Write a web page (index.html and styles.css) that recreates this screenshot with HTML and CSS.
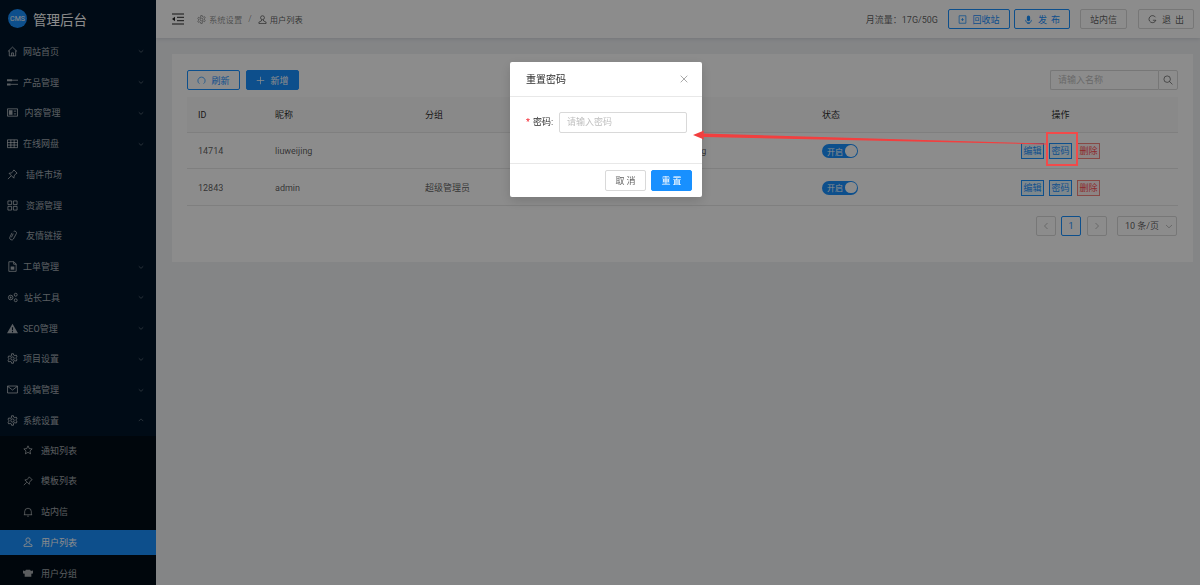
FILE: index.html
```html
<!DOCTYPE html>
<html lang="zh-CN">
<head>
<meta charset="utf-8">
<title>用户列表</title>
<link rel="stylesheet" href="styles.css">
</head>
<body>
<svg class="defs" width="0" height="0" aria-hidden="true">
  <symbol id="i-home" viewBox="0 0 12 12"><path d="M1 6 6 1.2 11 6M2.5 5v5.800h7V5M5 10.800V7.500h2v3.300"/></symbol>
  <symbol id="i-bars" viewBox="0 0 12 12"><path class="solid" d="M0 2.500h5.500v2.200H0zM0 7h4v2.200H0z"/><path d="M5.500 3.500H12M4 8h8"/></symbol>
  <symbol id="i-pic" viewBox="0 0 12 12"><path d="M.5 2h11v8H.5z"/><path class="solid" d="M2 3.500h4v5H2z"/><path d="M7.500 4.500h2.500M7.500 7.500h2.500"/></symbol>
  <symbol id="i-table" viewBox="0 0 12 12"><path d="M.5 2h11v8.500H.5zM.5 5h11M.5 7.700h11M4.200 2v8.500M7.800 2v8.500"/></symbol>
  <symbol id="i-pin" viewBox="0 0 12 12"><path d="M7.500 1 11 4.500 9.800 5 7.800 7.500 7.500 10 2.200 4.700 4.700 4.300 7 2.200ZM4.500 7.500 1 11"/></symbol>
  <symbol id="i-grid" viewBox="0 0 12 12"><path d="M1 1h4v4H1zM7 1h4v4H7zM1 7h4v4H1zM7 7h4v4H7z"/></symbol>
  <symbol id="i-link" viewBox="0 0 12 12"><path d="M7.300 1.500a2 2 0 0 1 2.900 2.400L7 9.800a2.200 2.200 0 0 1-4-1.700l2.500-5M6.800 4 4.800 8"/></symbol>
  <symbol id="i-file" viewBox="0 0 12 12"><path d="M2 .8h5.500L10 3.300v8H2zM7.300 1v2.500H10"/><path class="solid" d="M4 6h4v3.500H4z"/></symbol>
  <symbol id="i-tools" viewBox="0 0 12 12"><circle cx="4" cy="6" r="2.500"/><circle class="solid" cx="4" cy="6" r="1"/><circle cx="9.500" cy="3" r="1.600"/><circle cx="9.500" cy="9" r="1.600"/></symbol>
  <symbol id="i-warn" viewBox="0 0 12 12"><path class="solid" fill-rule="evenodd" d="M6 .8 12 11.200H0ZM5.400 4.500v3.500h1.200V4.500ZM5.400 8.800V10h1.200V8.800Z"/></symbol>
  <symbol id="i-gear" viewBox="0 0 12 12"><circle cx="6" cy="6" r="1.800"/><path d="M5 .8h2l.3 1.500 1.300.6 1.400-.7 1 1.700-1.200 1v1.300l1.200 1-1 1.700-1.400-.7-1.300.6L7 11.200H5l-.3-1.500-1.300-.6-1.400.7-1-1.700 1.200-1V5.800L1 4.800l1-1.700 1.400.7 1.300-.6Z"/></symbol>
  <symbol id="i-mail" viewBox="0 0 12 12"><path d="M.6 2.200h10.800v7.600H.6zM.8 2.600 6 6.600l5.200-4"/></symbol>
  <symbol id="i-star" viewBox="0 0 12 12"><path d="M6 1 7.500 4.300l3.500.4-2.600 2.400.7 3.500L6 8.800l-3.100 1.800.7-3.500L1 4.700l3.500-.4Z"/></symbol>
  <symbol id="i-bell" viewBox="0 0 12 12"><path d="M2 9.300V5.500a4 4 0 0 1 8 0v3.800M1 9.300h10M5 11h2"/></symbol>
  <symbol id="i-user" viewBox="0 0 12 12"><circle cx="6" cy="3.600" r="2.600"/><path d="M4.800 6.500 4.500 8 1.200 9.500v1.800h9.600V9.500L7.500 8l-.3-1.500"/></symbol>
  <symbol id="i-team" viewBox="0 0 12 12"><path class="solid" d="M3.500 2h5l1 1.500L12 3v3.500l-2 .5v3.500H2V7L0 6.500V3l2.500.5Z"/></symbol>
  <symbol id="i-chev" viewBox="0 0 8 8"><path d="M1 3 4 5.800 7 3"/></symbol>
  <symbol id="i-chev-up" viewBox="0 0 8 8"><path d="M1 5.500 4 2.500 7 5.500"/></symbol>
  <symbol id="i-left" viewBox="0 0 8 8"><path d="M5.500 1 2.500 4 5.500 7"/></symbol>
  <symbol id="i-right" viewBox="0 0 8 8"><path d="M2.500 1 5.500 4 2.500 7"/></symbol>
  <symbol id="i-fold" viewBox="0 0 12 12"><path d="M0 1h12M5 4.300h7M5 7.700h7M0 11h12"/><path class="solid" d="M3 3.800v4.400L0 6Z"/></symbol>
  <symbol id="i-reload" viewBox="0 0 12 12"><path d="M3.200 10.200a4.800 4.800 0 1 1 5.600 0"/></symbol>
  <symbol id="i-plus" viewBox="0 0 12 12"><path d="M6 1v10M1 6h10"/></symbol>
  <symbol id="i-trash" viewBox="0 0 12 12"><path d="M1.500 1h9v10h-9zM6 4v4M4.200 6.200h3.600"/></symbol>
  <symbol id="i-mic" viewBox="0 0 12 12"><path class="solid" d="M3.800 3a2.200 2.200 0 0 1 4.400 0v3a2.200 2.200 0 0 1-4.400 0Z"/><path d="M2 6.500a4 4 0 0 0 8 0M6 10v1.500M4 11.500h4"/></symbol>
  <symbol id="i-logout" viewBox="0 0 12 12"><path d="M10 3a4.700 4.700 0 1 0 .5 4H6.500"/></symbol>
  <symbol id="i-search" viewBox="0 0 12 12"><circle cx="5" cy="5" r="3.900"/><path d="M8 8 11.300 11.300"/></symbol>
  <symbol id="i-close" viewBox="0 0 12 12"><path d="M1 1 11 11M11 1 1 11"/></symbol>
</svg>

<div class="layout">
  <aside class="sidebar">
    <div class="brand"><span class="logo">CMS</span><span class="brand-name">管理后台</span></div>
    <nav class="menu">
      <a class="item"><svg class="ic"><use href="#i-home"/></svg><span>网站首页</span><svg class="chev"><use href="#i-chev"/></svg></a>
      <a class="item"><svg class="ic"><use href="#i-bars"/></svg><span>产品管理</span><svg class="chev"><use href="#i-chev"/></svg></a>
      <a class="item"><svg class="ic"><use href="#i-pic"/></svg><span class="gap-m">内容管理</span><svg class="chev"><use href="#i-chev"/></svg></a>
      <a class="item"><svg class="ic"><use href="#i-table"/></svg><span>在线网盘</span><svg class="chev"><use href="#i-chev"/></svg></a>
      <a class="item"><svg class="ic"><use href="#i-pin"/></svg><span class="gap-l">插件市场</span></a>
      <a class="item"><svg class="ic"><use href="#i-grid"/></svg><span class="gap-l">资源管理</span></a>
      <a class="item"><svg class="ic"><use href="#i-link"/></svg><span class="gap-l">友情链接</span></a>
      <a class="item"><svg class="ic"><use href="#i-file"/></svg><span>工单管理</span><svg class="chev"><use href="#i-chev"/></svg></a>
      <a class="item"><svg class="ic"><use href="#i-tools"/></svg><span class="gap-s">站长工具</span><svg class="chev"><use href="#i-chev"/></svg></a>
      <a class="item"><svg class="ic"><use href="#i-warn"/></svg><span>SEO管理</span><svg class="chev"><use href="#i-chev"/></svg></a>
      <a class="item"><svg class="ic"><use href="#i-gear"/></svg><span>项目设置</span><svg class="chev"><use href="#i-chev"/></svg></a>
      <a class="item"><svg class="ic"><use href="#i-mail"/></svg><span>投稿管理</span><svg class="chev"><use href="#i-chev"/></svg></a>
      <a class="item"><svg class="ic"><use href="#i-gear"/></svg><span>系统设置</span><svg class="chev"><use href="#i-chev-up"/></svg></a>
      <div class="submenu">
        <a class="sub"><svg class="ic"><use href="#i-star"/></svg><span>通知列表</span></a>
        <a class="sub"><svg class="ic"><use href="#i-pin"/></svg><span>模板列表</span></a>
        <a class="sub"><svg class="ic"><use href="#i-bell"/></svg><span>站内信</span></a>
        <a class="sub active"><svg class="ic"><use href="#i-user"/></svg><span>用户列表</span></a>
        <a class="sub"><svg class="ic"><use href="#i-team"/></svg><span>用户分组</span></a>
      </div>
    </nav>
  </aside>

  <div class="main">
    <header class="topbar">
      <svg class="fold"><use href="#i-fold"/></svg>
      <div class="crumbs">
        <span class="crumb"><svg class="ic-s"><use href="#i-gear"/></svg>系统设置</span>
        <span class="sep">/</span>
        <span class="crumb current"><svg class="ic-s"><use href="#i-user"/></svg>用户列表</span>
      </div>
      <div class="top-actions">
        <span class="traffic">月流量：17G/50G</span>
        <button class="tbtn primary w62"><svg class="ic-s"><use href="#i-trash"/></svg>回收站</button>
        <button class="tbtn primary w56 gap4 spaced"><svg class="ic-s"><use href="#i-mic"/></svg>发 布</button>
        <button class="tbtn w47 gap10">站内信</button>
        <button class="tbtn w56 gap11 spaced"><svg class="ic-s"><use href="#i-logout"/></svg>退 出</button>
      </div>
    </header>

    <section class="card">
      <div class="toolbar">
        <button class="btn outline"><svg class="ic-s"><use href="#i-reload"/></svg>刷新</button>
        <button class="btn solid"><svg class="ic-s"><use href="#i-plus"/></svg>新增</button>
        <div class="search"><input class="search-input" placeholder="请输入名称"><span class="search-btn"><svg class="ic-m"><use href="#i-search"/></svg></span></div>
      </div>
      <table class="table">
        <colgroup><col class="c1"><col class="c2"><col class="c3"><col class="c4"><col class="c5"><col class="c6"></colgroup>
        <thead><tr><th>ID</th><th>昵称</th><th>分组</th><th></th><th>状态</th><th class="center">操作</th></tr></thead>
        <tbody>
          <tr>
            <td>14714</td><td>liuweijing</td><td></td><td>liuweijing</td>
            <td><span class="switch">开启<i class="knob"></i></span></td>
            <td class="center"><span class="act">编辑</span><span class="act">密码</span><span class="act danger">删除</span></td>
          </tr>
          <tr>
            <td>12843</td><td>admin</td><td>超级管理员</td><td></td>
            <td><span class="switch">开启<i class="knob"></i></span></td>
            <td class="center"><span class="act">编辑</span><span class="act">密码</span><span class="act danger">删除</span></td>
          </tr>
        </tbody>
      </table>
      <div class="pager">
        <span class="page muted"><svg class="arrow-s"><use href="#i-left"/></svg></span>
        <span class="page on">1</span>
        <span class="page muted"><svg class="arrow-s"><use href="#i-right"/></svg></span>
        <span class="size">10 条/页<svg class="chev-s"><use href="#i-chev"/></svg></span>
      </div>
    </section>
  </div>
</div>

<div class="mask"></div>

<div class="modal">
  <div class="modal-head"><span>重置密码</span><svg class="close"><use href="#i-close"/></svg></div>
  <div class="modal-body">
    <label class="field-label"><em>*</em>密码:</label>
    <input class="field-input" placeholder="请输入密码">
  </div>
  <div class="modal-foot">
    <button class="mbtn">取 消</button>
    <button class="mbtn ok">重 置</button>
  </div>
</div>

<svg class="note" viewBox="0 0 1200 585" aria-hidden="true">
  <polygon class="arrow" points="693,135 704,130.500 703.500,133.500 1046,143.600 1046,144.400 703.500,137 704,139.500"/>
  <rect class="mark" x="1047" y="133" width="30" height="32"/>
</svg>
</body>
</html>
```
FILE: styles.css
```css
* { box-sizing: border-box; }
html, body { margin: 0; height: 100%; overflow: hidden; }
body {
  font-family: Roboto, "Noto Sans CJK SC", sans-serif;
  font-size: 9px;
  color: rgba(0, 0, 0, .65);
  background: #f0f2f5;
}
.defs { position: absolute; }
svg { fill: none; stroke: currentColor; stroke-width: 1; flex: none; }
svg .solid, symbol .solid { fill: currentColor; stroke: none; }

.layout { display: flex; height: 585px; }

/* sidebar */
.sidebar { width: 156px; flex: none; background: #001529; color: rgba(255, 255, 255, .65); overflow: hidden; }
.brand { height: 36px; display: flex; align-items: center; padding: 1px 0 0 8px; }
.logo {
  width: 19px; height: 19px; border-radius: 50%; background: #1890ff; color: #fff;
  display: flex; align-items: center; justify-content: center; font-size: 7px;
}
.brand-name { margin-left: 6px; font-size: 13.500px; color: #fff; }
.item { height: 30.750px; display: flex; align-items: center; padding: 0 12px 0 7px; }
.item .ic { width: 11px; height: 11px; }
.sub .ic { width: 10px; height: 10px; }
.item span { margin-left: 5px; }
.item .gap-s { margin-left: 6px; }
.item .gap-m { margin-left: 6.500px; }
.item .gap-l { margin-left: 8px; }
.chev { width: 6px; height: 6px; margin-left: auto; opacity: .6; }
.submenu { background: #000c17; }
.sub { height: 25.750px; margin-bottom: 5px; display: flex; align-items: center; padding-left: 23px; position: relative; top: 1.500px; }
.sub span { margin-left: 8px; }
.sub.active { background: #1890ff; color: #fff; }

/* header */
.main { flex: 1; min-width: 0; }
.topbar {
  height: 38px; background: #fff; display: flex; align-items: center;
  box-shadow: 0 1px 4px rgba(0, 21, 41, .12); padding: 0 6px 0 16px;
}
.fold { width: 12px; height: 12px; color: rgba(0, 0, 0, .85); }
.crumbs { display: flex; align-items: center; margin-left: 13px; color: rgba(0, 0, 0, .45); font-size: 8.300px; }
.crumb { display: flex; align-items: center; gap: 3px; }
.crumb.current { color: rgba(0, 0, 0, .65); }
.ic-s { width: 9px; height: 9px; }
.ic-m { width: 10px; height: 10px; }
.sep { margin: 0 6px; }
.top-actions { display: flex; align-items: center; margin-left: auto; }
.traffic { margin-right: 10px; }
.tbtn {
  height: 20px; padding: 0; border: 1px solid #d9d9d9; background: #fff; border-radius: 2px;
  font: inherit; color: rgba(0, 0, 0, .65); display: flex; align-items: center; justify-content: center; gap: 5px;
}
.tbtn.primary { border-color: #1890ff; color: #1890ff; }
.spaced { word-spacing: 2px; }
.w62 { width: 62px; }
.w56 { width: 56px; }
.w47 { width: 47px; }
.gap4 { margin-left: 4px; }
.gap10 { margin-left: 10px; }
.gap11 { margin-left: 11px; }

/* card */
.card { margin: 16px 7px 0 16px; background: #fff; padding: 16px 15px 26px; height: 208px; }
.toolbar { display: flex; align-items: center; height: 20px; }
.btn {
  width: 53px; height: 20px; padding: 0; border: 1px solid #1890ff; background: #fff; color: #1890ff;
  border-radius: 2px; font: inherit; display: flex; align-items: center; justify-content: center; gap: 5px;
}
.btn.solid { background: #1890ff; color: #fff; margin-left: 6px; }
.search { display: flex; margin-left: auto; height: 20px; }
.search-input {
  width: 108px; height: 20px; border: 1px solid #d9d9d9; border-right: 0; padding: 0 7px; font: inherit; outline: 0;
  border-radius: 2px 0 0 2px;
}
input::placeholder { color: #bfbfbf; }
.search-btn {
  width: 20px; border: 1px solid #d9d9d9; border-radius: 0 2px 2px 0; display: flex; align-items: center;
  justify-content: center; color: rgba(0, 0, 0, .55);
}

/* table */
.table { width: 991px; margin-top: 7px; border-collapse: collapse; table-layout: fixed; }
.c1 { width: 77px; } .c2 { width: 150px; } .c3 { width: 244px; }
.c4 { width: 153px; } .c5 { width: 132px; } .c6 { width: 235px; }
.table th { height: 35px; background: #fafafa; font-weight: 400; text-align: left; padding: 1px 0 0 11px; color: rgba(0, 0, 0, .85); border-bottom: 1px solid #e8e8e8; }
.table td { height: 36.500px; padding: 1.500px 0 0 11px; border-bottom: 1px solid #e8e8e8; }
.table .center { text-align: center; padding-left: 0; }
.switch {
  display: inline-flex; align-items: center; width: 36px; height: 14px; border-radius: 7px; background: #1890ff;
  color: #fff; padding: 0 1.500px 0 5px; font-size: 8px; justify-content: space-between; vertical-align: middle;
}
.knob { width: 11.500px; height: 11.500px; border-radius: 50%; background: #fff; }
.act {
  display: inline-block; width: 23px; height: 16px; line-height: 14px; border: 1px solid #1890ff; background: #e6f7ff;
  color: #1890ff; text-align: center; margin-left: 5px; font-size: 9px;
}
.act:first-child { margin-left: 0; }
.act.danger { border-color: #f5867f; background: #fff1f0; color: #ff4d4f; }

/* pager */
.pager { display: flex; justify-content: flex-end; align-items: center; margin-top: 10px; padding-right: 1px; width: 991px; }
.page {
  width: 20px; height: 20px; border: 1px solid #d9d9d9; border-radius: 2px; display: flex; align-items: center;
  justify-content: center; margin-right: 5.500px;
}
.page.muted { color: #bfbfbf; }
.page.on { border-color: #1890ff; color: #1890ff; }
.arrow-s { width: 8px; height: 8px; }
.size {
  width: 60px; height: 20px; border: 1px solid #d9d9d9; border-radius: 2px; display: flex; align-items: center;
  padding-left: 7px; margin-left: 5px;
}
.chev-s { width: 8px; height: 8px; margin-left: auto; margin-right: 3px; color: #bfbfbf; }

/* modal */
.mask { position: fixed; inset: 0; background: rgba(0, 0, 0, .45); }
.modal {
  position: fixed; left: 510px; top: 61.500px; width: 192px; height: 135.500px; background: #fff; border-radius: 2px;
  display: flex; flex-direction: column; box-shadow: 0 4px 12px rgba(0, 0, 0, .15);
}
.modal-head {
  height: 35px; flex: none; display: flex; align-items: center; justify-content: space-between; padding: 0 14px 0 16px;
  border-bottom: 1px solid #e8e8e8; font-size: 10px; color: rgba(0, 0, 0, .85);
}
.close { width: 8px; height: 8px; color: rgba(0, 0, 0, .5); }
.modal-body { flex: 1; display: flex; align-items: flex-start; padding: 15.500px 15px 0 16px; justify-content: space-between; }
.field-label { line-height: 20.500px; color: rgba(0, 0, 0, .85); white-space: nowrap; }
.field-label em { color: #f5222d; font-style: normal; margin-right: 3px; }
.field-input {
  width: 128px; height: 20.500px; border: 1px solid #d9d9d9; border-radius: 2px; padding: 0 7px; font: inherit; outline: 0;
}
.modal-foot {
  height: 34px; flex: none; display: flex; justify-content: flex-end; align-items: center; gap: 5px; padding: 0 10px 0 0;
  border-top: 1px solid #e8e8e8;
}
.mbtn { width: 41px; height: 21px; padding: 0; border: 1px solid #d9d9d9; border-radius: 2px; background: #fff; font: inherit; color: rgba(0, 0, 0, .65); }
.mbtn.ok { background: #1890ff; border-color: #1890ff; color: #fff; }

/* annotation */
.note { position: fixed; inset: 0; width: 1200px; height: 585px; stroke: none; pointer-events: none; }
.arrow { fill: #f23f3f; }
.mark { fill: none; stroke: #f24a4a; stroke-width: 2; }
```
